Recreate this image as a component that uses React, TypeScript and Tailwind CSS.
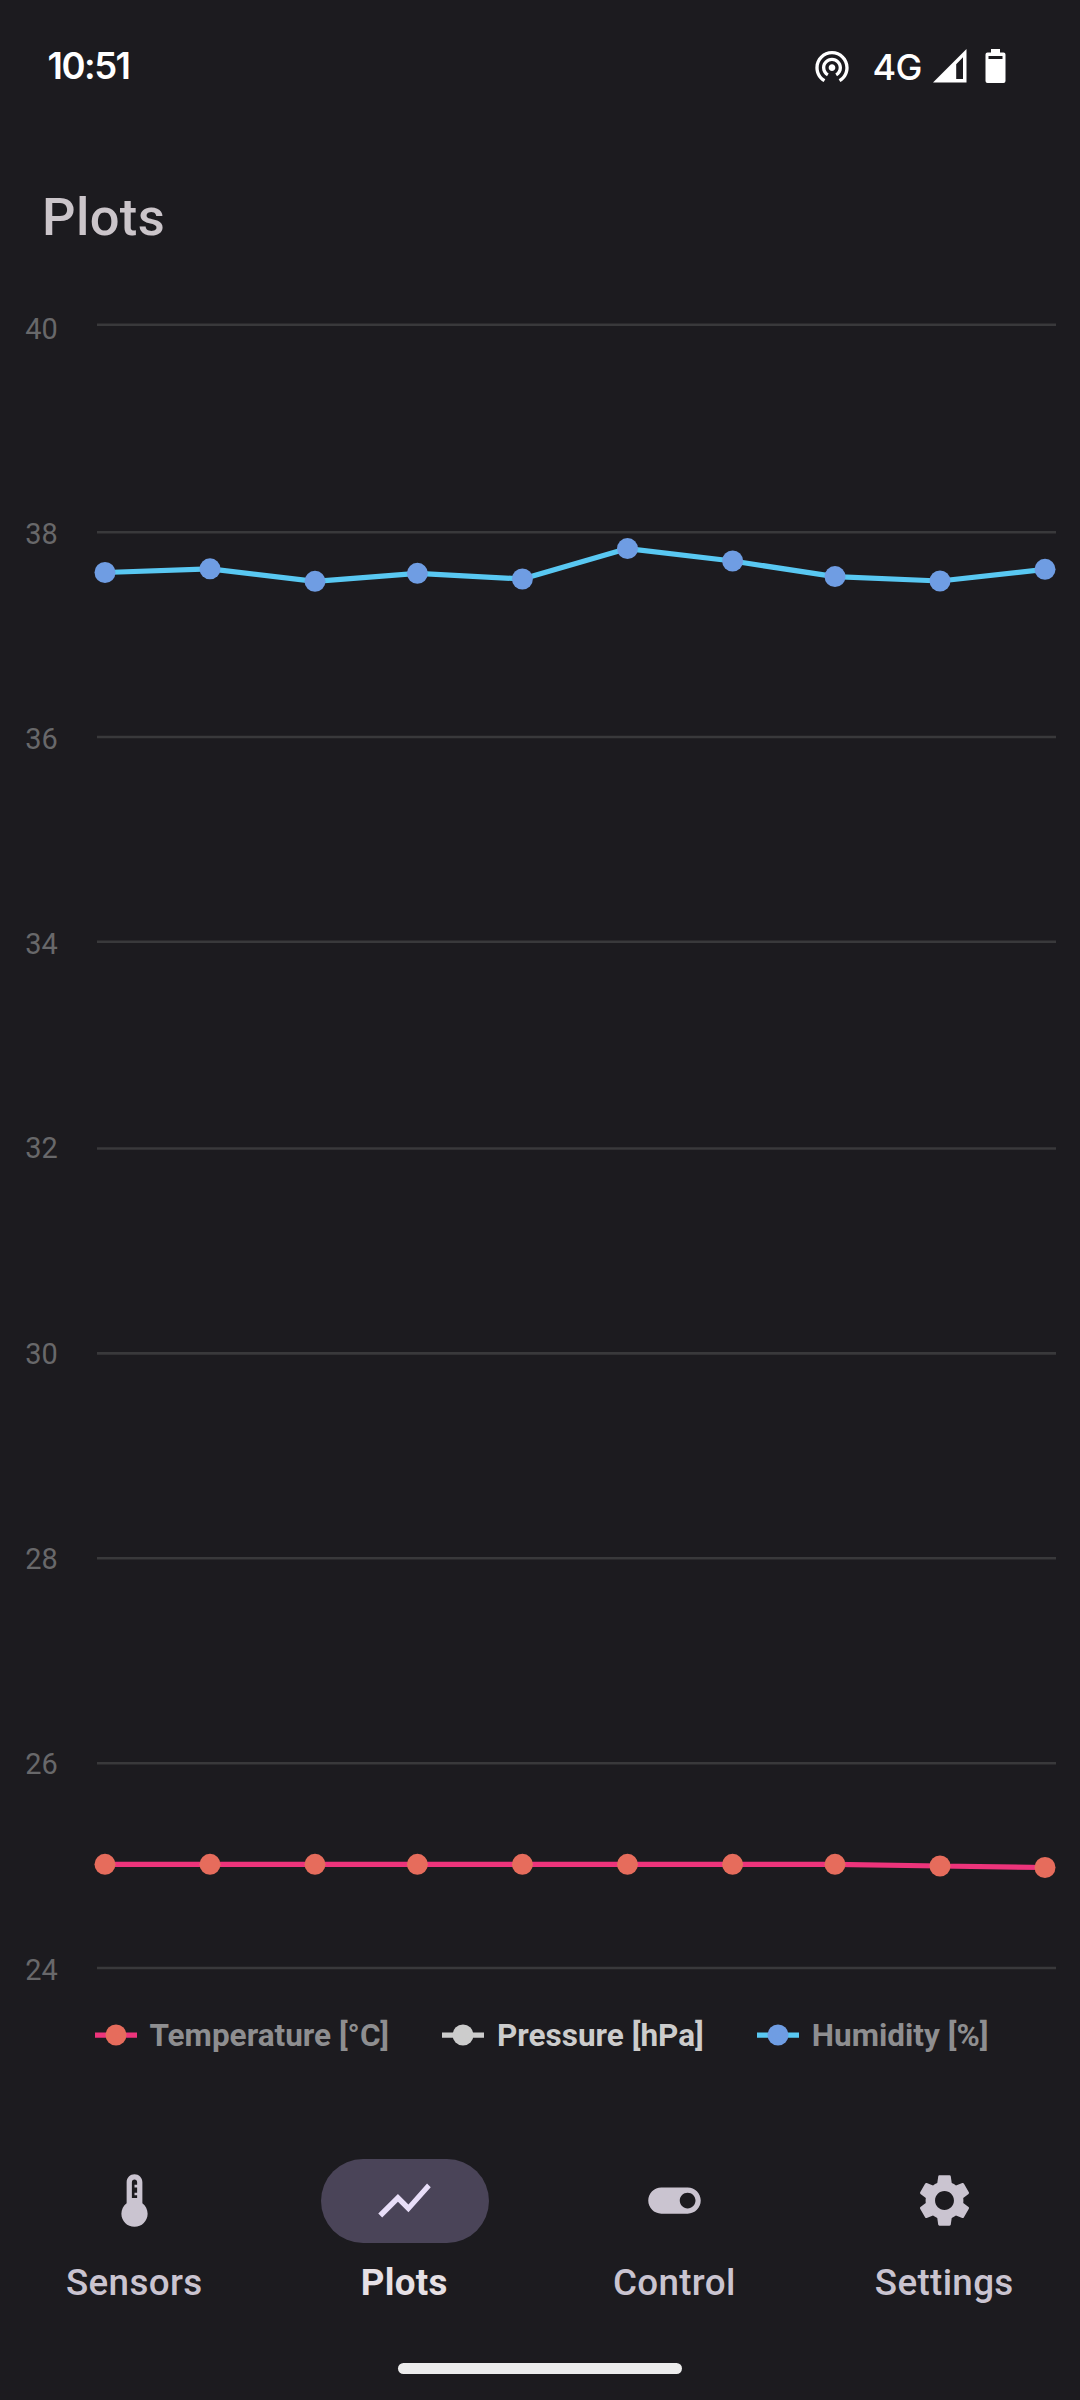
import type { ReactNode } from "react";
import { MdSettings, MdShowChart, MdThermostat, MdToggleOn, MdWifiTethering } from "react-icons/md";

const gridLines = [
  { label: "40", y: 324.8, baseline: 339 },
  { label: "38", y: 532.2, baseline: 544 },
  { label: "36", y: 737, baseline: 749 },
  { label: "34", y: 941.8, baseline: 954 },
  { label: "32", y: 1148.5, baseline: 1158 },
  { label: "30", y: 1353.4, baseline: 1363.5 },
  { label: "28", y: 1558.2, baseline: 1569 },
  { label: "26", y: 1763.2, baseline: 1774 },
  { label: "24", y: 1968, baseline: 1980 },
];

const xs = [105, 210, 315, 417.4, 522.4, 627.5, 732.6, 835, 940, 1045];
const humidity = [572.5, 568.8, 581.3, 573.3, 579, 548.6, 561, 576.6, 581, 569.3];
const temperature = [1864.3, 1864.3, 1864.3, 1864.3, 1864.3, 1864.3, 1864.3, 1864.3, 1866, 1867.5];

// The chart's view box starts this far down the page.
const chartTop = 280;

function Series({ ys, line, dot }: { ys: number[]; line: string; dot: string }) {
  return (
    <g>
      <polyline
        points={ys.map((y, i) => `${xs[i]},${y}`).join(" ")}
        fill="none"
        stroke={line}
        strokeWidth="5.25"
        strokeLinejoin="bevel"
      />
      {ys.map((y, i) => (
        <circle key={i} cx={xs[i]} cy={y} r="10.5" fill={dot} />
      ))}
    </g>
  );
}

function Chart() {
  return (
    <svg className="block h-[1720px] w-full shrink-0" viewBox={`0 ${chartTop} 1080 1720`}>
      {gridLines.map((g) => (
        <g key={g.label}>
          <line x1="97" x2="1056" y1={g.y} y2={g.y} stroke="#39393b" strokeWidth="2.63" />
          <text
            x="57.8"
            y={g.baseline}
            textAnchor="end"
            className="fill-[#68686a] font-['Roboto',sans-serif] text-[28.9px]"
          >
            {g.label}
          </text>
        </g>
      ))}
      <Series ys={temperature} line="#ed347b" dot="#e66c5c" />
      <Series ys={humidity} line="#59c8f2" dot="#6f9de3" />
    </svg>
  );
}

function LegendItem({ label, line, dot, text }: { label: string; line: string; dot: string; text: string }) {
  return (
    <div className="flex items-center gap-[13px]">
      <svg className="h-[22px] w-[42px]" viewBox="0 0 42 22">
        <line x1="0" x2="42" y1="11" y2="11" stroke={line} strokeWidth="5.25" />
        <circle cx="21" cy="11" r="10.5" fill={dot} />
      </svg>
      <span className={`pt-[2px] text-[31.5px] leading-[36px] font-bold whitespace-nowrap ${text}`}>{label}</span>
    </div>
  );
}

function NavItem({ label, icon, active = false }: { label: string; icon: ReactNode; active?: boolean }) {
  return (
    <div className={`flex w-[270px] flex-col items-center ${active ? "text-[#e8def8]" : "text-[#cac4d0]"}`}>
      <div
        className={`flex h-[84px] w-[168px] items-center justify-center rounded-full pr-[1px] pb-[1px] text-[63px] ${active ? "bg-[#4a4458]" : ""}`}
      >
        {icon}
      </div>
      <span
        className={`mt-[18px] pr-[1.5px] text-[36.75px] leading-[44px] tracking-[0.35px] ${active ? "font-bold text-[#e6e0e5]" : "font-medium"}`}
      >
        {label}
      </span>
    </div>
  );
}

export default function App() {
  return (
    <div className="flex h-[2400px] w-[1080px] flex-col overflow-hidden bg-[#1c1b1f] font-['Roboto',sans-serif]">
      <header className="flex h-[132px] shrink-0 items-center justify-between pr-[74px] pl-[47.5px] text-white">
        <span className="pt-[1px] font-['Inter',sans-serif] text-[36.5px] font-semibold tracking-[-1.5px]">10:51</span>
        <div className="flex items-center">
          <MdWifiTethering className="mr-[20.5px] size-[40px]" />
          <span className="mr-[11px] pt-[1px] font-['Inter',sans-serif] text-[36px] font-medium tracking-[-0.5px]">4G</span>
          <svg className="mr-[18px] h-[34px] w-[34px]" viewBox="0 0 34 34">
            <path fillRule="evenodd" fill="#fff" d="M0 33.5 33.5 0V33.5ZM23.2 15.2 30 8.3V30H23.2Z" />
          </svg>
          <svg className="h-[34px] w-[21px]" viewBox="0 0 21 34">
            <path
              fillRule="evenodd"
              fill="#fff"
              d="M6 0H15V3.5H18.5Q20.5 3.5 20.5 5.5V32Q20.5 34 18.5 34H2.5Q.5 34 .5 32V5.5Q.5 3.5 2.5 3.5H6ZM3.5 7V10H17.5V7Z"
            />
          </svg>
        </div>
      </header>

      <div className="flex h-[148px] shrink-0 items-start pt-[53px] pl-[42px]">
        <h1 className="text-[52.5px] leading-[64px] font-medium tracking-[0.4px] text-[#cbc5ca]">Plots</h1>
      </div>

      <Chart />

      <div className="flex h-[70px] shrink-0 items-center gap-[53px] pl-[94.5px]">
        <LegendItem label="Temperature [°C]" line="#ed347b" dot="#e66c5c" text="text-[#8e8e90]" />
        <LegendItem label="Pressure [hPa]" line="#cccccc" dot="#cccccc" text="text-[#cccccc]" />
        <LegendItem label="Humidity [%]" line="#59c8f2" dot="#6f9de3" text="text-[#8e8e90]" />
      </div>

      <nav className="mt-[89px] flex shrink-0">
        <NavItem label="Sensors" icon={<MdThermostat />} />
        <NavItem label="Plots" icon={<MdShowChart />} active />
        <NavItem label="Control" icon={<MdToggleOn />} />
        <NavItem label="Settings" icon={<MdSettings />} />
      </nav>

      <div className="mt-[58px] h-[11px] w-[284px] shrink-0 self-center rounded-full bg-[#ececec]" />
    </div>
  );
}
